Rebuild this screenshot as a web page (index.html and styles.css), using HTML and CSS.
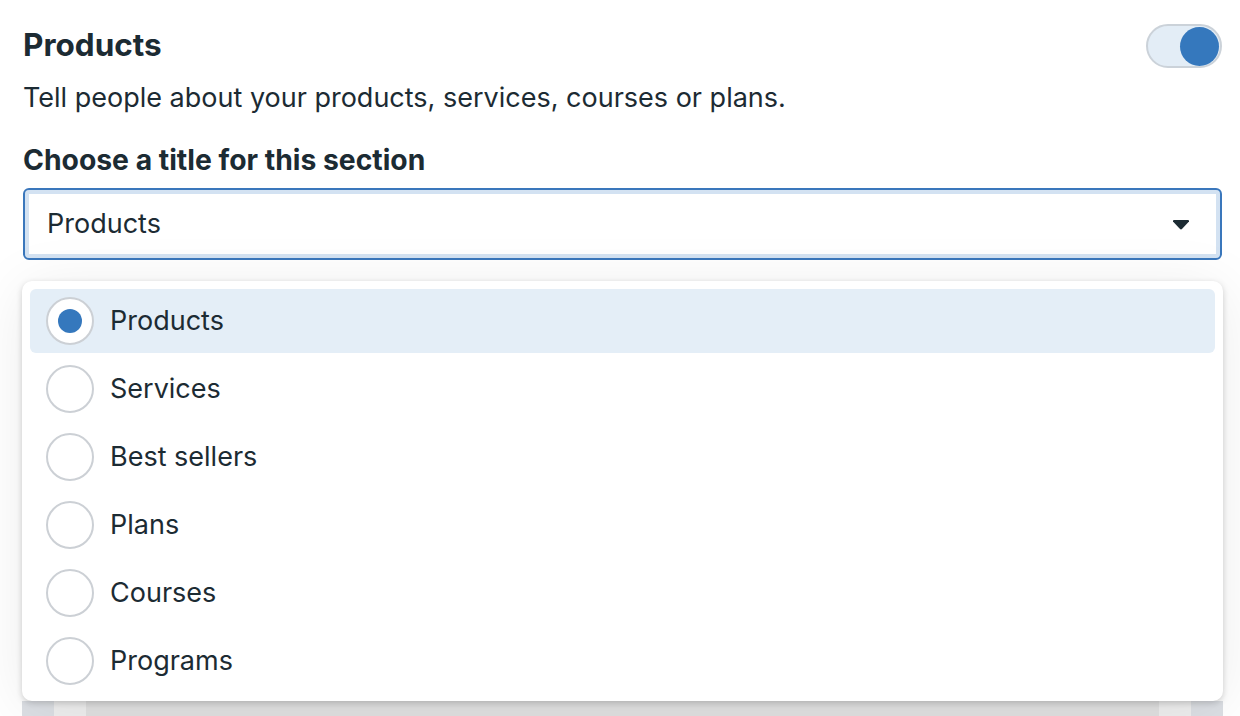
FILE: index.html
```html
<!DOCTYPE html>
<html>
<head>
<meta charset="utf-8">
<link rel="stylesheet" href="styles.css">
</head>
<body>
<div class="page">
  <div class="header">
    <h1 class="title">Products</h1>
    <div class="toggle"><span class="knob"></span></div>
  </div>
  <p class="desc">Tell people about your products, services, courses or plans.</p>
  <div class="label">Choose a title for this section</div>
  <div class="field">
    <div class="select">
      <span class="select-text">Products</span>
      <svg class="caret" width="18" height="10" viewBox="0 0 18 10"><path d="M1 1.5 Q0.5 0 2 0 H16 Q17.5 0 17 1.5 L10.2 8.8 Q9 10 7.8 8.8 Z" fill="#1c2b33"/></svg>
    </div>
    <ul class="menu">
      <li class="option selected"><span class="radio"><span class="dot"></span></span><span class="opt-text">Products</span></li>
      <li class="option"><span class="radio"></span><span class="opt-text">Services</span></li>
      <li class="option"><span class="radio"></span><span class="opt-text">Best sellers</span></li>
      <li class="option"><span class="radio"></span><span class="opt-text">Plans</span></li>
      <li class="option"><span class="radio"></span><span class="opt-text">Courses</span></li>
      <li class="option"><span class="radio"></span><span class="opt-text">Programs</span></li>
    </ul>
  </div>
  <div class="behind">
    <div class="behind-col edge"></div>
    <div class="behind-col light"></div>
    <div class="behind-col mid"></div>
    <div class="behind-col light"></div>
    <div class="behind-col edge"></div>
  </div>
</div>
</body>
</html>
```
FILE: styles.css
```css
* { box-sizing: border-box; }
html, body { margin: 0; padding: 0; }
body {
  width: 1240px;
  height: 716px;
  overflow: hidden;
  background: #ffffff;
  font-family: Inter, "Noto Sans", "Liberation Sans", sans-serif;
  color: #1c2b33;
}
.page {
  padding: 24px 18px 0 23px;
}
.header {
  display: flex;
  justify-content: space-between;
  align-items: flex-start;
  height: 54px;
}
.title {
  margin: 4px 0 0 0;
  font-size: 31.5px;
  font-weight: 700;
  line-height: 34px;
}
.toggle {
  width: 76px;
  height: 44px;
  border-radius: 22px;
  border: 2px solid #cbd2d9;
  background: #e3edf6;
  display: flex;
  justify-content: flex-end;
  align-items: center;
  padding: 0 1px;
}
.knob {
  width: 39px;
  height: 39px;
  border-radius: 50%;
  background: #3578bd;
}
.desc {
  margin: 0;
  font-size: 27px;
  line-height: 40px;
}
.label {
  margin-top: 25px;
  font-size: 28.3px;
  font-weight: 700;
  line-height: 34px;
}
.field {
  position: relative;
  margin-top: 11px;
}
.select {
  height: 72px;
  border: 2px solid #3a77bc;
  border-radius: 6px;
  box-shadow: inset 0 0 0 4px #d3e2f2;
  display: flex;
  align-items: center;
  justify-content: space-between;
  padding: 0 30px 0 22px;
  background: #fff;
}
.select-text {
  font-size: 27px;
  line-height: 32px;
}
.caret { display: block; margin-top: 2px; }
.menu {
  position: absolute;
  left: -1px;
  right: -1px;
  top: 93px;
  margin: 0;
  padding: 8px;
  list-style: none;
  background: #fff;
  border-radius: 10px;
  box-shadow: 0 2px 6px rgba(0,0,0,0.18), 0 6px 60px rgba(0,0,0,0.08);
  z-index: 2;
  display: flex;
  flex-direction: column;
  gap: 4px;
}
.option {
  height: 64px;
  display: flex;
  align-items: center;
  padding: 0 16px;
  border-radius: 6px;
}
.option.selected {
  background: #e4eef7;
}
.radio {
  width: 48px;
  height: 48px;
  border-radius: 50%;
  border: 2px solid #ccd0d5;
  background: #fff;
  display: flex;
  align-items: center;
  justify-content: center;
  flex-shrink: 0;
}
.dot {
  width: 24px;
  height: 24px;
  border-radius: 50%;
  background: #3578bd;
}
.opt-text {
  margin-left: 16px;
  font-size: 27px;
  line-height: 32px;
}
.behind {
  margin-top: 441px;
  margin-left: -1px;
  margin-right: -1px;
  display: flex;
  height: 40px;
}
.behind-col.edge { width: 32px; background: #dcdfe4; }
.behind-col.light { width: 32px; background: #eeeeee; }
.behind-col.mid { flex: 1; background: #e0e0e0; }
```
